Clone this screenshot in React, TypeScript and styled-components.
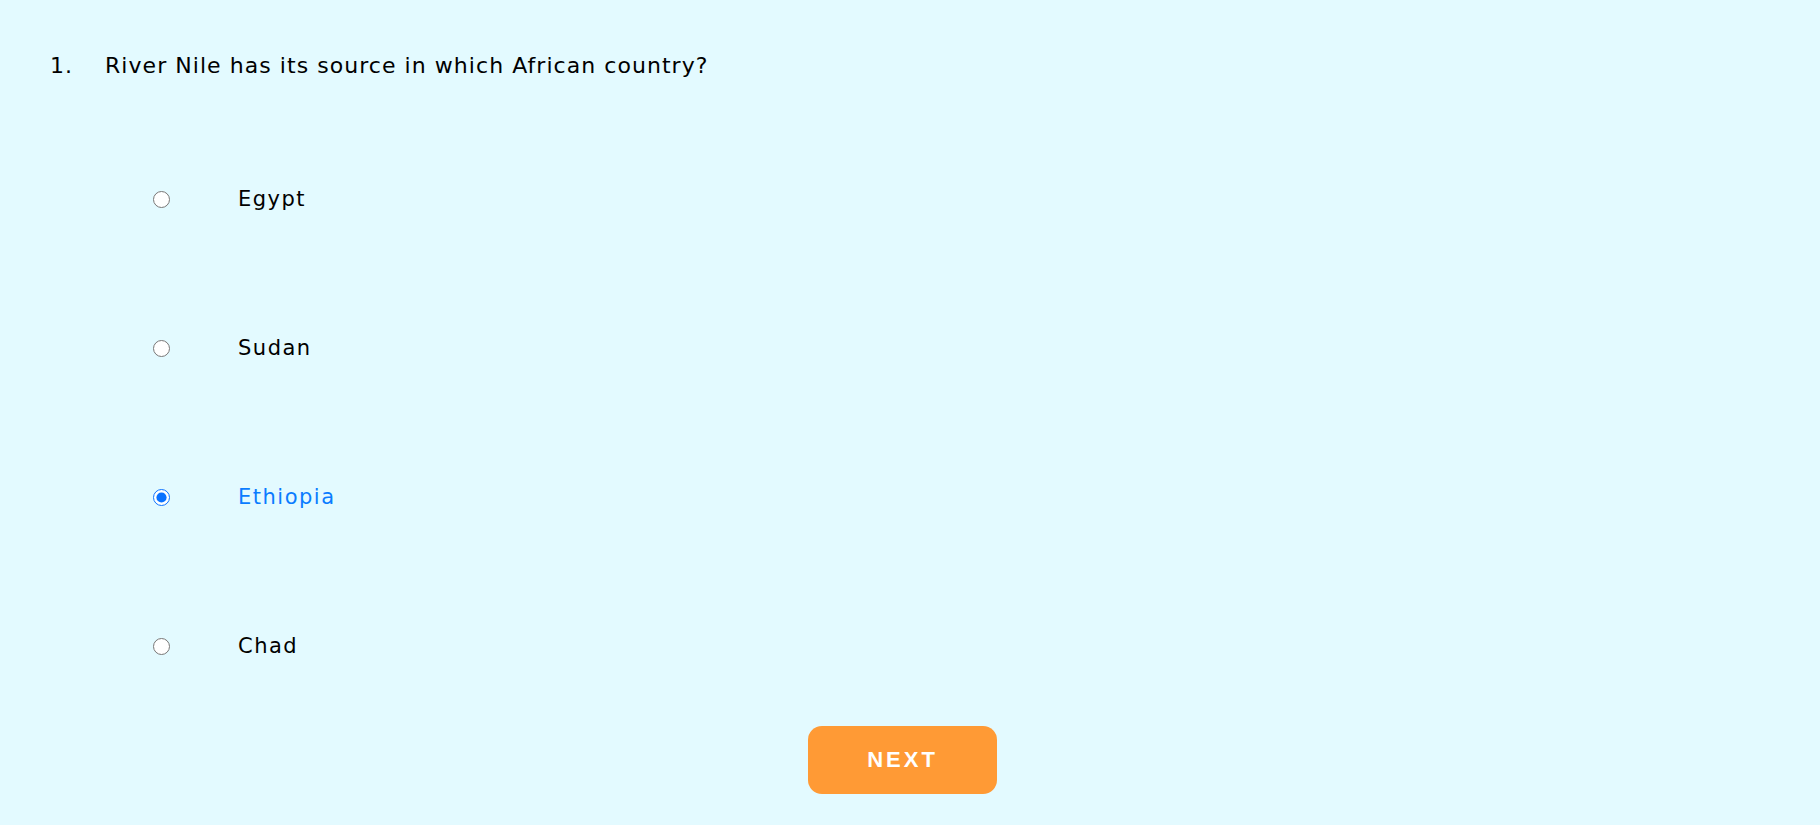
import React, { useState } from "react";
import styled, { createGlobalStyle } from "styled-components";

const Global = createGlobalStyle`
  html, body { margin: 0; padding: 0; background: #e3faff; }
  body { font-family: "DejaVu Sans", Verdana, sans-serif; color: #000; }
`;

const Page = styled.main`
  min-height: 825px;
  box-sizing: border-box;
  padding: 50px 0 0 0;
  display: flex;
  flex-direction: column;
`;

const Question = styled.div`
  display: flex;
  align-items: baseline;
  padding-left: 50px;
  font-size: 22px;
  line-height: 32px;
  letter-spacing: 1.05px;
`;

const Num = styled.span`
  width: 55px;
`;

const Options = styled.div`
  display: flex;
  flex-direction: column;
  padding: 0 0 0 153px;
  margin-top: 101px;
  gap: 117px;
`;

const Option = styled.label<{ $active: boolean }>`
  display: flex;
  align-items: center;
  height: 32px;
  font-size: 21px;
  letter-spacing: 1.5px;
  color: ${(p) => (p.$active ? "#0a7cff" : "#000")};
  cursor: pointer;
`;

const Radio = styled.input`
  width: 17px;
  height: 17px;
  margin: 0 68px 0 0;
  accent-color: #0a72ff;
`;

const Footer = styled.div`
  display: flex;
  justify-content: center;
  padding-right: 15px;
  margin-top: 64px;
`;

const NextButton = styled.button`
  width: 189px;
  height: 68px;
  border: none;
  border-radius: 14px;
  background: #ff9a35;
  color: #fff;
  font-family: "Liberation Sans", Arial, sans-serif;
  font-weight: 700;
  font-size: 22px;
  letter-spacing: 3px;
  cursor: pointer;
`;

const options = ["Egypt", "Sudan", "Ethiopia", "Chad"];

export default function App() {
  const [sel, setSel] = useState("Ethiopia");
  return (
    <>
      <Global />
      <Page>
        <Question>
          <Num>1.</Num>
          <span>River Nile has its source in which African country?</span>
        </Question>
        <Options>
          {options.map((o) => (
            <Option key={o} $active={sel === o}>
              <Radio type="radio" name="q1" checked={sel === o} onChange={() => setSel(o)} />
              {o}
            </Option>
          ))}
        </Options>
        <Footer>
          <NextButton>NEXT</NextButton>
        </Footer>
      </Page>
    </>
  );
}
